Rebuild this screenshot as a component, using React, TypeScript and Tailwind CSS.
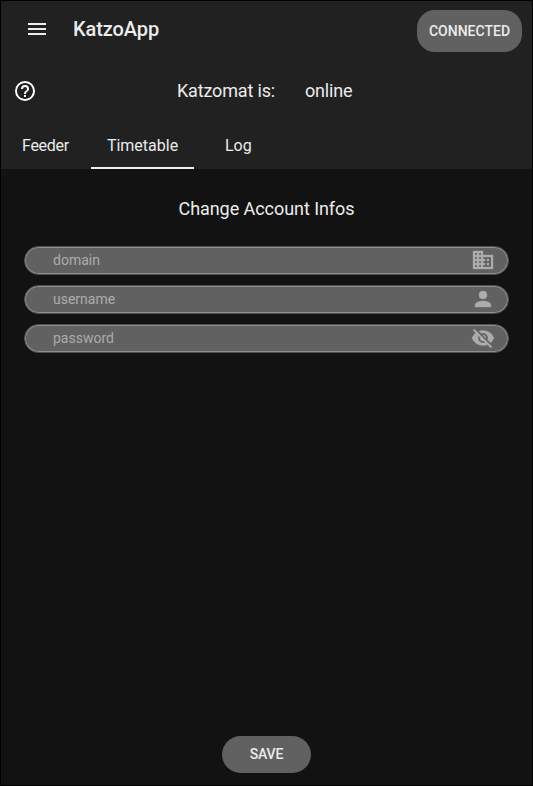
import React from "react";

const icons = {
  menu: "M3 6h18v2H3V6m0 5h18v2H3v-2m0 5h18v2H3v-2Z",
  help: "M11 18h2v-2h-2v2m1-16A10 10 0 0 0 2 12a10 10 0 0 0 10 10 10 10 0 0 0 10-10A10 10 0 0 0 12 2m0 18c-4.41 0-8-3.59-8-8s3.59-8 8-8 8 3.59 8 8-3.59 8-8 8m0-14a4 4 0 0 0-4 4h2a2 2 0 0 1 2-2 2 2 0 0 1 2 2c0 2-3 1.75-3 5h2c0-2.25 3-2.5 3-5a4 4 0 0 0-4-4Z",
  domain: "M18 15h-2v2h2m0-6h-2v2h2m2 6h-8v-2h2v-2h-2v-2h2v-2h-2V9h8M10 7H8V5h2m0 6H8V9h2m0 6H8v-2h2m0 6H8v-2h2M6 7H4V5h2m0 6H4V9h2m0 6H4v-2h2m0 6H4v-2h2m6-10V3H2v18h20V7H12Z",
  account: "M12 4a4 4 0 0 1 4 4 4 4 0 0 1-4 4 4 4 0 0 1-4-4 4 4 0 0 1 4-4m0 10c4.42 0 8 1.79 8 4v2H4v-2c0-2.21 3.58-4 8-4Z",
  eyeOff: "M11.83 9 15 12.16V12a3 3 0 0 0-3-3h-.17m-4.3.8 1.55 1.55c-.05.21-.08.42-.08.65a3 3 0 0 0 3 3c.22 0 .44-.03.65-.08l1.55 1.55c-.67.33-1.41.53-2.2.53a5 5 0 0 1-5-5c0-.79.2-1.53.53-2.2M2 4.27l2.28 2.28.45.45C3.08 8.3 1.78 10 1 12c1.73 4.39 6 7.5 11 7.5 1.55 0 3.03-.3 4.38-.84l.43.42L19.73 22 21 20.73 3.27 3M12 7a5 5 0 0 1 5 5c0 .64-.13 1.26-.36 1.82l2.93 2.93c1.5-1.25 2.7-2.89 3.43-4.75-1.73-4.39-6-7.5-11-7.5-1.4 0-2.74.25-4 .7l2.17 2.15C10.74 7.13 11.35 7 12 7Z",
};

function Icon({ name, className = "" }: { name: keyof typeof icons; className?: string }) {
  return (
    <svg viewBox="0 0 24 24" className={"size-6 shrink-0 " + className} fill="currentColor">
      <path d={icons[name]} />
    </svg>
  );
}

function Field({ label, icon }: { label: string; icon: keyof typeof icons }) {
  return (
    <div className="flex h-[29px] items-center justify-between rounded-full border border-[#505050] bg-[#616161] pl-7 pr-[13.5px] text-sm leading-none text-[#acacac] shadow-[inset_0_0_0_1px_#8f8f8f]">
      <span className="-mt-px">{label}</span>
      <Icon name={icon} className="-mt-px stroke-current stroke-[0.35]" />
    </div>
  );
}

export default function App() {
  return (
    <div className="flex h-[786px] w-[533px] flex-col border border-black bg-[#121212] font-[Roboto,sans-serif] text-[#ececec]">
      <header className="flex h-42 shrink-0 flex-col bg-[#212121]">
        <div className="flex h-14 items-center pl-6 pr-2.5">
          <Icon name="menu" />
          <h1 className="ml-6 grow text-xl font-medium tracking-[-0.1px]">KatzoApp</h1>
          <button className="mt-1 h-[42px] w-[105px] rounded-[18px] bg-[#616161] text-sm font-medium">CONNECTED</button>
        </div>
        <div className="flex h-[68px] items-center pl-3 text-lg">
          <Icon name="help" className="text-white" />
          <span className="ml-[140px] w-32 tracking-[-0.17px]">Katzomat is:</span>
          <span className="tracking-[-0.2px]">online</span>
        </div>
        <nav className="flex h-11 text-base">
          <span className="w-[90px] pl-[21px] pt-[9px] tracking-[-0.3px]">Feeder</span>
          <span className="w-[103px] border-b-2 border-[#eeeeee] pt-[9px] text-center">Timetable</span>
          <span className="pl-[31px] pt-[9px]">Log</span>
        </nav>
      </header>
      <main className="flex grow flex-col px-[23px]">
        <h2 className="mt-[26px] text-center text-lg leading-7 tracking-[-0.06px]">Change Account Infos</h2>
        <form className="mt-[23px] flex flex-col gap-2.5">
          <Field label="domain" icon="domain" />
          <Field label="username" icon="account" />
          <Field label="password" icon="eyeOff" />
        </form>
        <button type="button" className="mb-3 mt-auto h-[37px] w-[89px] self-center rounded-full bg-[#616161] pb-0.5 text-sm font-medium tracking-[-0.2px]">SAVE</button>
      </main>
    </div>
  );
}
